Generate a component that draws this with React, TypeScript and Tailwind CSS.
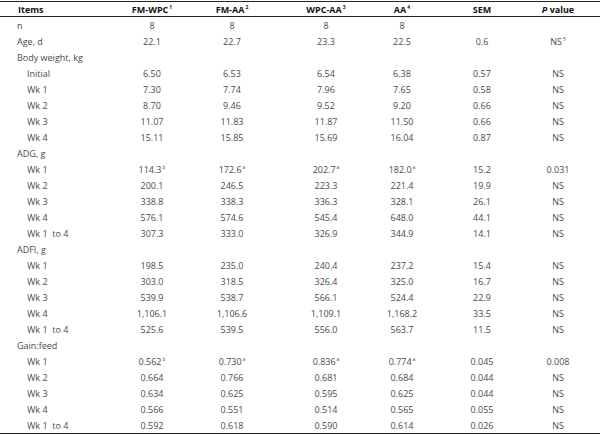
type Row = {
  label: string
  sub?: boolean
  vals?: string[]
  sups?: (string | undefined)[]
}

const rows: Row[] = [
  { label: 'n', vals: ['8', '8', '8', '8', '', ''] },
  { label: 'Age, d', vals: ['22.1', '22.7', '23.3', '22.5', '0.6', 'NS'], sups: [, , , , , '5'] },
  { label: 'Body weight, kg' },
  { label: 'Initial', sub: true, vals: ['6.50', '6.53', '6.54', '6.38', '0.57', 'NS'] },
  { label: 'Wk 1', sub: true, vals: ['7.30', '7.74', '7.96', '7.65', '0.58', 'NS'] },
  { label: 'Wk 2', sub: true, vals: ['8.70', '9.46', '9.52', '9.20', '0.66', 'NS'] },
  { label: 'Wk 3', sub: true, vals: ['11.07', '11.83', '11.87', '11.50', '0.66', 'NS'] },
  { label: 'Wk 4', sub: true, vals: ['15.11', '15.85', '15.69', '16.04', '0.87', 'NS'] },
  { label: 'ADG, g' },
  { label: 'Wk 1', sub: true, vals: ['114.3', '172.6', '202.7', '182.0', '15.2', '0.031'], sups: ['b', 'a', 'a', 'a'] },
  { label: 'Wk 2', sub: true, vals: ['200.1', '246.5', '223.3', '221.4', '19.9', 'NS'] },
  { label: 'Wk 3', sub: true, vals: ['338.8', '338.3', '336.3', '328.1', '26.1', 'NS'] },
  { label: 'Wk 4', sub: true, vals: ['576.1', '574.6', '545.4', '648.0', '44.1', 'NS'] },
  { label: 'Wk 1  to 4', sub: true, vals: ['307.3', '333.0', '326.9', '344.9', '14.1', 'NS'] },
  { label: 'ADFI, g' },
  { label: 'Wk 1', sub: true, vals: ['198.5', '235.0', '240.4', '237.2', '15.4', 'NS'] },
  { label: 'Wk 2', sub: true, vals: ['303.0', '318.5', '326.4', '325.0', '16.7', 'NS'] },
  { label: 'Wk 3', sub: true, vals: ['539.9', '538.7', '566.1', '524.4', '22.9', 'NS'] },
  { label: 'Wk 4', sub: true, vals: ['1,106.1', '1,106.6', '1,109.1', '1,168.2', '33.5', 'NS'] },
  { label: 'Wk 1  to 4', sub: true, vals: ['525.6', '539.5', '556.0', '563.7', '11.5', 'NS'] },
  { label: 'Gain:feed' },
  { label: 'Wk 1', sub: true, vals: ['0.562', '0.730', '0.836', '0.774', '0.045', '0.008'], sups: ['b', 'a', 'a', 'a'] },
  { label: 'Wk 2', sub: true, vals: ['0.664', '0.766', '0.681', '0.684', '0.044', 'NS'] },
  { label: 'Wk 3', sub: true, vals: ['0.634', '0.625', '0.595', '0.625', '0.044', 'NS'] },
  { label: 'Wk 4', sub: true, vals: ['0.566', '0.551', '0.514', '0.565', '0.055', 'NS'] },
  { label: 'Wk 1  to 4', sub: true, vals: ['0.592', '0.618', '0.590', '0.614', '0.026', 'NS'] },
]

const grid = 'grid grid-cols-[112px_80px_80px_108px_44px_116px_36px] h-4 items-center'

function Sup({ s }: { s?: string }) {
  if (!s) return null
  return <sup className="text-[5px] -top-[4px] ml-px">{s}</sup>
}

export default function App() {
  return (
    <div className="w-[600px] h-[435px] bg-white pt-px font-['Open_Sans',sans-serif] text-[9px] leading-none text-[#4a4a4a]">
      <div className="border-t border-b border-[#222]">
        <div className={grid + ' h-[14px] font-bold text-[#111]'}>
          <div className="pl-[18px]">Items</div>
          <div className="text-center">FM-WPC<Sup s="1" /></div>
          <div className="text-center">FM-AA<Sup s="2" /></div>
          <div className="text-center">WPC-AA<Sup s="3" /></div>
          <div className="text-center">AA<Sup s="4" /></div>
          <div className="text-center">SEM</div>
          <div className="text-center"><span className="italic">P</span> value</div>
        </div>
      </div>
      <div className="border-b border-[#222]">
        {rows.map((r, i) => (
          <div key={i} className={grid}>
            <div className={r.sub ? 'pl-[27px] whitespace-pre' : 'pl-[17px]'}>{r.label}</div>
            {(r.vals ?? ['', '', '', '', '', '']).map((v, j) => (
              <div key={j} className="text-center">
                {v}
                <Sup s={r.sups?.[j]} />
              </div>
            ))}
          </div>
        ))}
      </div>
    </div>
  )
}
